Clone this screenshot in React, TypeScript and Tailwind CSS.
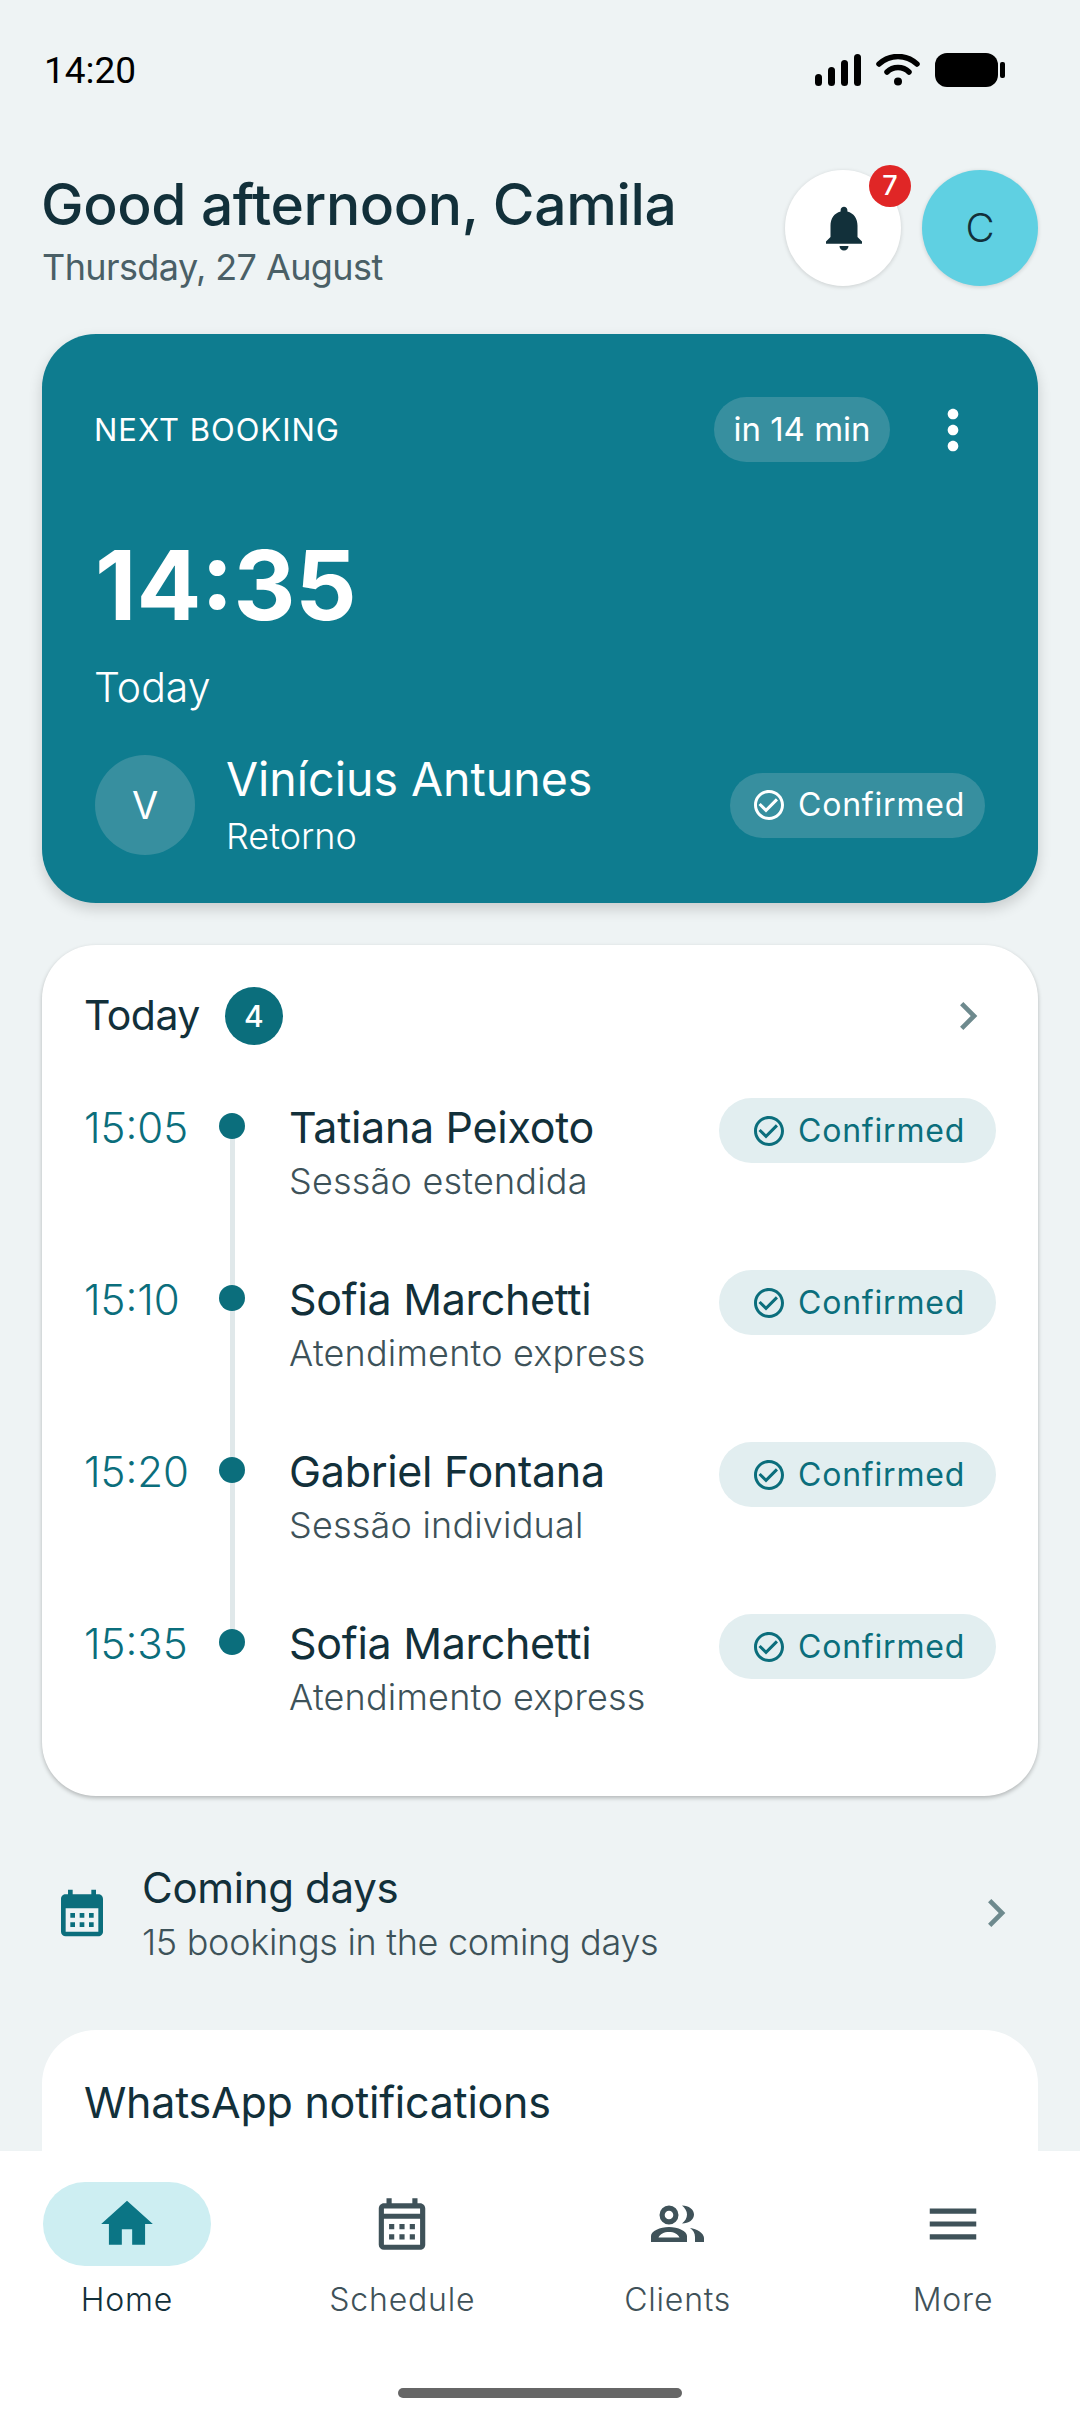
import {
  MdCalendarMonth,
  MdCheckCircleOutline,
  MdChevronRight,
  MdHome,
  MdMenu,
  MdMoreVert,
  MdNotifications,
  MdOutlineCalendarMonth,
} from "react-icons/md";

const bookings = [
  { time: "15:05", name: "Tatiana Peixoto", service: "Sessão estendida" },
  { time: "15:10", name: "Sofia Marchetti", service: "Atendimento express" },
  { time: "15:20", name: "Gabriel Fontana", service: "Sessão individual" },
  { time: "15:35", name: "Sofia Marchetti", service: "Atendimento express" },
];

function StatusBar() {
  return (
    <div className="flex h-[140px] shrink-0 items-center justify-between pl-[44px] pr-[75px] font-['Roboto',sans-serif] text-[37px] text-black">
      <span className="mt-[1px]">14:20</span>
      <div className="flex items-center gap-[15px]">
        <svg width="46" height="32" viewBox="0 0 46 32" fill="black">
          <rect x="0" y="20" width="7" height="12" rx="3.5" />
          <rect x="13" y="13" width="7" height="19" rx="3.5" />
          <rect x="26" y="6" width="7" height="26" rx="3.5" />
          <rect x="39" y="0" width="7" height="32" rx="3.5" />
        </svg>
        <svg width="44" height="32" viewBox="0 0 44 32" fill="none" stroke="black" strokeWidth="5.5" strokeLinecap="round">
          <path d="M3 10C14 0 30 0 41 10" />
          <path d="M11 18C17 12 27 12 33 18" />
          <circle cx="22" cy="27.5" r="4" fill="black" stroke="none" />
        </svg>
        <svg width="70" height="34" viewBox="0 0 70 34" fill="black">
          <rect x="0" y="0" width="63" height="34" rx="12" />
          <rect x="65" y="9" width="5" height="16" rx="2" />
        </svg>
      </div>
    </div>
  );
}

function ClientsIcon() {
  return (
    <svg width="54" height="38" viewBox="0 0 54 38" fill="currentColor">
      <circle cx="18" cy="10" r="6.9" fill="none" stroke="currentColor" strokeWidth="5.2" />
      <path d="M31 .5C38 .5 43 4.5 43 9.5S38 18.5 31 18.5C34 16 36 13 36 9.5S34 3 31 .5Z" />
      <path
        fillRule="evenodd"
        d="M0 37V31C0 26 9 22 18 22S36 26 36 31V37ZM7.5 32.5H28.500C27 29 23 27 18 27S9 29 7.500 32.500Z"
      />
      <path d="M39 23C46 24 53 28 53 33V37H44V32C44 28 42 25 39 23Z" />
    </svg>
  );
}

function Header() {
  return (
    <div className="flex h-[150px] items-start justify-between pl-[42px] pr-[42px] pt-[30px]">
      <div>
        <h1 className="ml-[-1px] text-[57px] font-medium leading-[70px] tracking-[-0.4px] text-[#12303a]">Good afternoon, Camila</h1>
        <p className="mt-[2px] text-[36px] leading-[50px] tracking-[-0.6px] text-[#4a5f66]">Thursday, 27 August</p>
      </div>
      <div className="flex gap-[21px]">
        <div className="relative flex size-[116px] items-center justify-center rounded-full bg-white shadow-[0_1px_4px_rgba(0,0,0,0.15)]">
          <MdNotifications className="ml-[2px] size-[54px] text-[#12303a]" />
          <span className="absolute right-[-10px] top-[-5px] flex size-[42px] items-center justify-center rounded-full bg-[#e02626] text-[27px] font-medium text-white">7</span>
        </div>
        <div className="flex size-[116px] items-center justify-center rounded-full bg-[#5fd0e2] text-[40px] font-light text-[#12303a] shadow-[0_1px_4px_rgba(0,0,0,0.15)]">C</div>
      </div>
    </div>
  );
}

function ConfirmedPill({ hero }: { hero?: boolean }) {
  return (
    <span
      className={
        hero
          ? "flex h-[65px] w-[255px] shrink-0 items-center gap-[11px] rounded-full bg-[#378f9f] pl-[21px] text-[32px] tracking-[0.8px] text-white"
          : "flex h-[65px] w-[277px] shrink-0 items-center gap-[11px] rounded-full bg-[#e2eef0] pl-[32px] pt-[1px] text-[32px] tracking-[0.8px] text-[#0b6e7c]"
      }
    >
      <MdCheckCircleOutline className="size-[36px]" />
      Confirmed
    </span>
  );
}

function HeroCard() {
  return (
    <section className="mx-[42px] mt-[44px] h-[569px] rounded-[54px] bg-[#0e7c8f] pl-[53px] pr-[53px] pt-[63px] text-white shadow-[0_6px_14px_rgba(0,0,0,0.16)]">
      <div className="flex h-[65px] items-center justify-between">
        <span className="ml-[-1px] pt-[2px] text-[31px] tracking-[1px]">NEXT BOOKING</span>
        <div className="flex items-center gap-[31px]">
          <span className="flex h-[65px] w-[176px] items-center justify-center rounded-full bg-[#378f9f] pt-[1px] text-[33px]">in 14 min</span>
          <MdMoreVert className="size-[64px]" />
        </div>
      </div>
      <p className="mt-[63px] text-[96px] font-bold leading-[120px]">14:35</p>
      <p className="ml-[-1px] mt-[12px] text-[41px] font-light leading-[60px]">Today</p>
      <div className="mt-[31px] flex items-center">
        <div className="flex size-[100px] shrink-0 items-center justify-center rounded-full bg-[#378f9f] text-[38px]">V</div>
        <div className="ml-[31px] flex-1">
          <p className="pt-[2px] text-[46.5px] leading-[58px]">Vinícius Antunes</p>
          <p className="mt-[2px] text-[36px] font-light leading-[52px]">Retorno</p>
        </div>
        <ConfirmedPill hero />
      </div>
    </section>
  );
}

function TodayCard() {
  return (
    <section className="mx-[42px] mt-[42px] h-[851px] rounded-[54px] bg-white pl-[42px] pr-[42px] pt-[42px] shadow-[0_2px_4px_rgba(0,0,0,0.25)]">
      <div className="flex h-[58px] items-center">
        <span className="text-[41px] tracking-[-0.5px] text-[#12303a]">Today</span>
        <span className="ml-[25px] flex size-[58px] items-center justify-center rounded-full bg-[#0b6e7c] text-[30px] font-medium text-white">4</span>
        <MdChevronRight className="ml-auto size-[56px] text-[#6e8a8e]" />
      </div>
      <div className="mt-[53px]">
        {bookings.map((b, i) => (
          <div key={i} className="flex h-[172px] items-start">
            <span className="w-[135px] pt-[1px] text-[42px] font-light leading-[58px] text-[#0b6e7c]">{b.time}</span>
            <div className="relative flex h-full w-[26px] justify-center pt-[15px]">
              {i < bookings.length - 1 && <div className="absolute bottom-[-15px] top-[28px] w-[5px] bg-[#e0e8ea]" />}
              <div className="relative size-[26px] rounded-full bg-[#0b6e7c]" />
            </div>
            <div className="ml-[44px] flex-1">
              <p className="text-[43px] leading-[58px] tracking-[-0.3px] text-[#12303a]">{b.name}</p>
              <p className="text-[36px] font-light leading-[50px] tracking-[0.2px] text-[#3d5259]">{b.service}</p>
            </div>
            <ConfirmedPill />
          </div>
        ))}
      </div>
    </section>
  );
}

function ComingDays() {
  return (
    <div className="mt-[62px] flex h-[110px] items-center pl-[54px] pr-[56px]">
      <MdCalendarMonth className="size-[56px] text-[#0b6e7c]" />
      <div className="ml-[32px] flex-1">
        <p className="text-[42px] leading-[56px] tracking-[-0.3px] text-[#12303a]">Coming days</p>
        <p className="mt-[1px] text-[36px] font-light leading-[50px] tracking-[-0.3px] text-[#3d5259]">15 bookings in the coming days</p>
      </div>
      <MdChevronRight className="size-[56px] text-[#6e8a8e]" />
    </div>
  );
}

function NavItem({ label, icon, active }: { label: string; icon: React.ReactNode; active?: boolean }) {
  return (
    <div className="flex flex-col items-center">
      <div className={`flex h-[84px] w-[168px] items-center justify-center rounded-full ${active ? "bg-[#cdeef2] text-[#0b7585]" : "text-[#3f5259]"}`}>
        {icon}
      </div>
      <span className={`mt-[14px] text-[32px] font-light leading-[40px] tracking-[0.8px] ${active ? "text-[#12303a]" : "text-[#3f5259]"}`}>{label}</span>
    </div>
  );
}

function BottomNav() {
  return (
    <nav className="relative h-[273px] shrink-0 bg-white pt-[31px]">
      <div className="flex justify-between px-[43px]">
        <NavItem label="Home" active icon={<MdHome className="size-[62px]" />} />
        <NavItem label="Schedule" icon={<MdOutlineCalendarMonth className="size-[62px]" />} />
        <NavItem label="Clients" icon={<ClientsIcon />} />
        <NavItem label="More" icon={<MdMenu className="size-[62px]" />} />
      </div>
      <div className="absolute bottom-[26px] left-[398px] h-[10px] w-[284px] rounded-full bg-[#666666]" />
    </nav>
  );
}

export default function App() {
  return (
    <div className="flex h-[2424px] w-[1080px] flex-col overflow-hidden bg-[#eef3f4] font-['Inter',sans-serif]">
      <StatusBar />
      <main className="flex-1 overflow-hidden">
        <Header />
        <HeroCard />
        <TodayCard />
        <ComingDays />
        <section className="mx-[42px] mt-[62px] h-[300px] rounded-[54px] bg-white pl-[42px] pt-[43px]">
          <p className="text-[43px] leading-[58px] tracking-[-0.25px] text-[#12303a]">WhatsApp notifications</p>
        </section>
      </main>
      <BottomNav />
    </div>
  );
}
